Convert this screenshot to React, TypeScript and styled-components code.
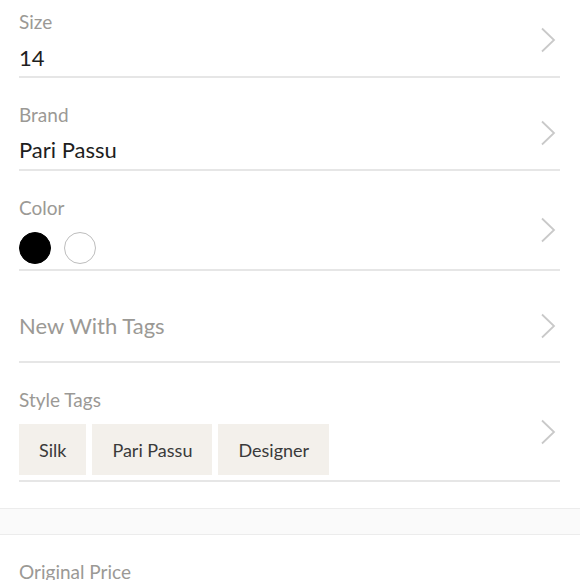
import React from 'react';
import styled, { createGlobalStyle } from 'styled-components';

const GlobalStyle = createGlobalStyle`
  html, body {
    margin: 0;
    padding: 0;
    background: #ffffff;
    overflow: hidden;
  }
  body {
    font-family: Lato, "Noto Sans", sans-serif;
  }
`;

const Page = styled.main`
  width: 580px;
  height: 580px;
  overflow: hidden;
  background: #ffffff;
`;

// the list is scrolled a little, so the first row is cut at the top
const List = styled.div`
  margin-top: -15px;
`;

const Row = styled.div<{ $padBottom?: number }>`
  display: flex;
  align-items: center;
  margin: 0 20px 0 19px;
  padding: 25px 0 ${({ $padBottom }) => $padBottom ?? 5.3}px;
  border-bottom: 2px solid #e6e6e6;
`;

const Body = styled.div<{ $minHeight?: number }>`
  flex: 1;
  display: flex;
  flex-direction: column;
  justify-content: center;
  min-height: ${({ $minHeight }) => $minHeight ?? 0}px;
`;

const Label = styled.div`
  font-size: 19px;
  line-height: 24px;
  color: #9b9995;
`;

const Placeholder = styled(Label)`
  font-size: 22px;
  line-height: 26px;
`;

const Value = styled.div`
  margin-top: 9.5px;
  font-size: 22px;
  line-height: 27px;
  color: #1e1e1e;
`;

const Swatches = styled.div`
  display: flex;
  gap: 13px;
  margin-top: 12px;
`;

const Swatch = styled.span<{ $fill: string }>`
  width: 32px;
  height: 32px;
  box-sizing: border-box;
  border-radius: 50%;
  background: ${({ $fill }) => $fill};
  border: 1px solid ${({ $fill }) => ($fill === '#000000' ? '#000000' : '#bdbdbd')};
`;

const Chips = styled.div`
  display: flex;
  gap: 6px;
  margin-top: 12px;
`;

const Chip = styled.span`
  display: flex;
  align-items: center;
  height: 51px;
  padding: 0 20px;
  background: #f3f0eb;
  font-size: 18px;
  color: #3a3a3a;
`;

const Chevron = styled.svg`
  flex: none;
  width: 16px;
  height: 26px;
  margin-right: 4px;
`;

const Band = styled.div`
  margin-top: 26px;
  height: 25px;
  background: #fafafa;
  border-top: 1px solid #ececec;
  border-bottom: 1px solid #ececec;
`;

const Arrow = () => (
  <Chevron viewBox="0 0 16 26">
    <path d="M2 1.5 L14 13 L2 24.5" fill="none" stroke="#c9c9c9" strokeWidth="1.8" />
  </Chevron>
);

const tags = ['Silk', 'Pari Passu', 'Designer'];

export default function App() {
  return (
    <Page>
      <GlobalStyle />
      <List>
        <Row>
          <Body>
            <Label>Size</Label>
            <Value>14</Value>
          </Body>
          <Arrow />
        </Row>
        <Row>
          <Body>
            <Label>Brand</Label>
            <Value>Pari Passu</Value>
          </Body>
          <Arrow />
        </Row>
        <Row>
          <Body>
            <Label>Color</Label>
            <Swatches>
              <Swatch $fill="#000000" />
              <Swatch $fill="#ffffff" />
            </Swatches>
          </Body>
          <Arrow />
        </Row>
        <Row>
          <Body $minHeight={60}>
            <Placeholder>New With Tags</Placeholder>
          </Body>
          <Arrow />
        </Row>
        <Row $padBottom={4.8}>
          <Body>
            <Label>Style Tags</Label>
            <Chips>
              {tags.map((t) => (
                <Chip key={t}>{t}</Chip>
              ))}
            </Chips>
          </Body>
          <Arrow />
        </Row>
      </List>
      <Band />
      <Row>
        <Body>
          <Label>Original Price</Label>
        </Body>
      </Row>
    </Page>
  );
}
